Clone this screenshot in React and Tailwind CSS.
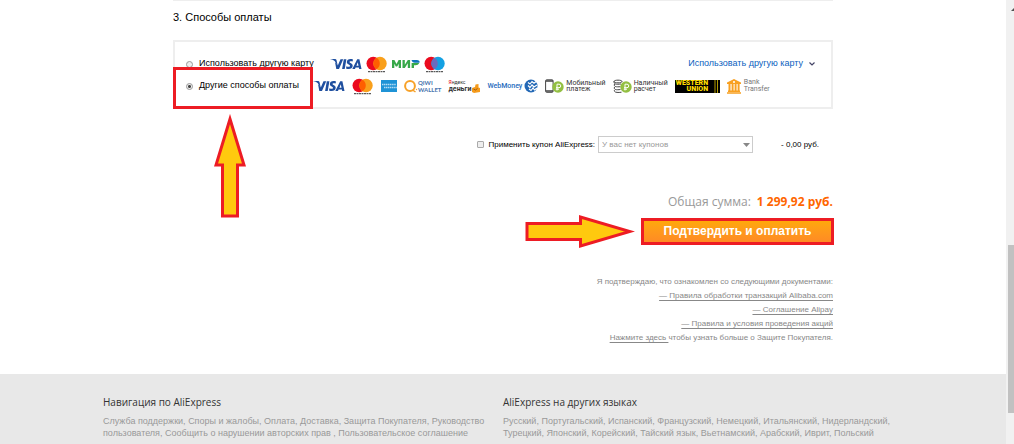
import React, { useState } from 'react';

const Visa = () => (
  <svg width="32" height="12" viewBox="0 0 32 12" role="img" aria-label="VISA">
    <path d="M.5 1H5c.8 0 1.300.4 1.500 1.100L8 9 5.500 4.200C4.500 2.500 2.800 1.600.5 1.300z" fill="#1f4f9f" />
    <path d="M5 4 6.300 11h2.700L13.200 1.200h-2.700L7.800 7.600z" fill="#1f4f9f" />
    <path d="M13.800 1.200h2.600L14.700 11h-2.600z" fill="#1f4f9f" />
    <path d="M23 1.500c-3-1.200-6.200-.2-6.200 2.400 0 2.400 3.300 2.500 3.300 3.900 0 1.300-2.200 1.200-3.700.4l-.4 2.200c3 1.200 6.700.4 6.700-2.700 0-2.500-3.200-2.600-3.200-3.700 0-1 1.800-1 3.100-.4z" fill="#1f4f9f" />
    <path d="M27.200 1.200h2.200L31.500 11h-2.300l-.3-1.400h-3.300L25 11h-2.700zM27.800 4.200l-1.400 3.600h2.100z" fill="#1f4f9f" fillRule="evenodd" />
  </svg>
);

const Circles = ({ left, right, middle, label }) => (
  <svg width="22" height="17" viewBox="0 0 22 17" role="img" aria-label={label}>
    <circle cx="7.200" cy="7.500" r="6.700" fill={left} />
    <circle cx="14" cy="7.500" r="6.700" fill={right} />
    <path d="M10.600 1.800a6.700 6.700 0 0 1 0 11.400a6.700 6.700 0 0 1 0-11.400z" fill={middle} />
    <path d="M2 15.700h17" stroke="#333" strokeDasharray="2 .5" />
  </svg>
);

const MasterCard = () => <Circles left="#eb0a1e" right="#f9a01b" middle="#ff5f00" label="mastercard" />;
const Maestro = () => <Circles left="#eb0a1e" right="#14a1e3" middle="#6c6bbd" label="maestro" />;

const Mir = () => (
  <svg width="28" height="10" viewBox="0 0 28 10" role="img" aria-label="МИР">
    <path d="M0 9V1h2.400L4.500 5 6.600 1H9v8H6.700V4.800L5.200 7.500H3.800L2.300 4.800V9z" fill="#37a849" />
    <path d="M10.500 9V1h2.300v4.700L15.800 1h2.300v8h-2.300V4.300L12.800 9z" fill="#37a849" />
    <path d="M19.600 4h7.600c-.7 1.600-2 2.200-3.500 2.200H22V9h-2.400z" fill="#37a849" />
    <path d="M19.500 1h5.300c2 0 3.200 1 2.700 2.700h-4.700C21 3.700 19.800 2.600 19.500 1z" fill="#0f75bc" />
  </svg>
);

const Amex = () => (
  <svg width="16" height="12" viewBox="0 0 16 12" role="img" aria-label="American Express">
    <path d="M0 0h16v12H0z" fill="#1f93d6" />
    <path d="M1 4.500h14" stroke="#b4dcf4" strokeWidth="1.500" strokeDasharray="1.400 .5" />
    <path d="M3 7.600h13" stroke="#b4dcf4" strokeWidth="1.500" strokeDasharray="1.400 .5" />
  </svg>
);

const Qiwi = () => (
  <span className="flex items-center">
    <svg width="14" height="13" viewBox="0 0 14 13">
      <circle cx="6" cy="6" r="4.900" fill="none" stroke="#f7a128" strokeWidth="2" />
      <path d="m8.500 10 3 2" stroke="#f7a128" strokeWidth="1.500" />
      <circle cx="12.500" cy="9.500" r=".7" fill="#f7a128" />
    </svg>
    <span className="font-['Lato',sans-serif] text-[6px] leading-[7px] font-bold text-[#4774ad]">
      QIWI
      <br />
      WALLET
    </span>
  </span>
);

const YandexMoney = () => (
  <span className="flex items-end gap-px">
    <span className="font-['Roboto',sans-serif] text-[#333]">
      <span className="block text-[5px] leading-[5px]">
        <span className="text-red-600">Я</span>ндекс
      </span>
      <span className="block text-[7px] leading-[8px] font-bold">деньги</span>
    </span>
    <svg width="8" height="9" viewBox="0 0 8 9">
      <path d="M0 4 3 3l.5-2.500L6.500 0v3.500L8 4v4L2 9 0 8z" fill="#f59b1c" />
      <path d="m1.500 5 2 1 2-1.500" stroke="#8a4b10" fill="none" strokeWidth=".8" />
    </svg>
  </span>
);

const WebMoney = () => (
  <span className="flex items-center gap-0.5">
    <span className="font-['Roboto',sans-serif] text-[7px] leading-[14px] font-medium text-[#1f6bbd]">WebMoney</span>
    <svg width="14" height="14" viewBox="0 0 14 14">
      <circle cx="7" cy="7" r="6.500" fill="#2167b5" />
      <path d="M4 3.500 6 5l2-2.500 2 1.800 2.500-2M4 6.500l2 2L8 6l2 2 3-2M5 10l2 1.500L9 9l1.500 2L13 9" stroke="#fff" strokeWidth="1.200" fill="none" />
    </svg>
  </span>
);

const Ruble = ({ x, y }) => (
  <g transform={`translate(${x} ${y})`}>
    <circle r="5.700" fill="#93bf42" />
    <path d="M-1 3.500v-6.300h2a1.700 1.700 0 0 1 0 3.500h-3M-2.200 2.200H1" stroke="#fff" fill="none" />
  </g>
);

const Caption = ({ children }) => (
  <span className="font-['Roboto',sans-serif] text-[7px] leading-[6px] whitespace-pre-line text-[#333]">{children}</span>
);

const MobilePay = () => (
  <span className="flex items-center gap-0.5">
    <svg width="19" height="15" viewBox="0 0 19 15">
      <rect x=".6" y=".8" width="7.500" height="12.500" rx="1" fill="none" stroke="#444" />
      <path d="M1 2h7M1 12h7" stroke="#444" strokeWidth="1.500" />
      <Ruble x={13} y={8} />
    </svg>
    <Caption>{'Мобильный\nплатеж'}</Caption>
  </span>
);

const CashPay = () => (
  <span className="flex items-center gap-0.5">
    <svg width="19" height="15" viewBox="0 0 19 15">
      <path d="M1 2.500C1 .7 9 .7 9 2.500S1 4.300 1 2.500c0 3 2 3 7 2.500M1.500 5c-1 3 2 3 6 2.700M1.500 8c-1 3 2 3 6 2.500M1.500 11c-1 2.500 3 2.800 7 2.200" fill="none" stroke="#444" />
      <Ruble x={13} y={8} />
    </svg>
    <Caption>{'Наличный\nрасчет'}</Caption>
  </span>
);

const WesternUnion = () => (
  <span className="flex h-[13px] w-[45px] justify-between bg-black pr-0.5 text-right font-['Roboto',sans-serif] text-[7px] leading-[6px] font-black text-[#ffdd00]">
    <span className="pl-px">
      WESTERN
      <br />
      UNION
    </span>
    <svg width="4" height="13" viewBox="0 0 4 13">
      <path d="M1 0v13M3.500 0v13" stroke="#fd0" strokeWidth=".7" />
    </svg>
  </span>
);

const BankTransfer = () => (
  <span className="flex items-center gap-[3px]">
    <svg width="14" height="15" viewBox="0 0 14 15">
      <path d="M7 0 14 3.600V5H0V3.600zM1 11.500h12V13H1zM0 13.300h14v1.500H0zM1.500 5h2v6.500h-2zM4.600 5h2v6.500h-2zM7.600 5h2v6.500h-2zM10.600 5h2v6.500h-2z" fill="#f8a020" />
      <circle cx="7" cy="2.900" r="1" fill="#fff" />
    </svg>
    <span className="font-['Roboto',sans-serif] text-[7px] leading-[7px] text-[#777]">
      Bank
      <br />
      Transfer
    </span>
  </span>
);

const documents = [
  '— Правила обработки транзакций Alibaba.com',
  '— Соглашение Alipay',
  '— Правила и условия проведения акций',
];

const footerColumns = [
  {
    title: 'Навигация по AliExpress',
    links: ['Служба поддержки', 'Споры и жалобы', 'Оплата', 'Доставка', 'Защита Покупателя', 'Руководство пользователя', 'Сообщить о нарушении авторских прав ', 'Пользовательское соглашение'],
  },
  {
    title: 'AliExpress на других языках',
    links: ['Русский', 'Португальский', 'Испанский', 'Французский', 'Немецкий', 'Итальянский', 'Нидерландский', 'Турецкий', 'Японский', 'Корейский', 'Тайский язык', 'Вьетнамский', 'Арабский', 'Иврит', 'Польский'],
  },
];

const radioClass =
  'm-0 mr-1.5 size-[7px] shrink-0 appearance-none rounded-full border border-[#999] bg-[#eee] checked:bg-[radial-gradient(#444_1px,#eee_2px)]';

export default function App() {
  const [method, setMethod] = useState('other');

  return (
    <div className="flex h-screen overflow-hidden bg-white font-['Liberation_Sans',Arial,sans-serif] text-black">
      <div className="flex min-w-0 flex-1 flex-col">
        <main className="mx-auto w-full max-w-[660px] border-t border-[#eee]">
          <h2 className="pt-2 pb-[15px] text-[11px] leading-4">3. Способы оплаты</h2>

          <section className="border-2 border-[#eee] pt-[11px] pb-2.5 pl-[11px] text-[9px]">
            <div className="flex h-[22px] items-center">
              <label className="flex items-center whitespace-nowrap">
                <input type="radio" name="method" className={radioClass} checked={method === 'card'} onChange={() => setMethod('card')} />
                Использовать другую карту
              </label>
              <div className="ml-4 flex items-center gap-1">
                <Visa />
                <MasterCard />
                <Mir />
                <Maestro />
              </div>
              <a href="#cards" className="mr-4 ml-auto flex items-center gap-1.5 text-[#0b5fc0]">
                Использовать другую карту
                <svg width="6" height="4" viewBox="0 0 6 4">
                  <path d="m.5.500 2.500 2.500L5.500.500" fill="none" stroke="#446" strokeWidth="1.200" />
                </svg>
              </a>
            </div>
            <div className="flex h-[22px] items-center">
              <div className="relative">
                <label className="flex items-center whitespace-nowrap">
                  <input type="radio" name="method" className={radioClass} checked={method === 'other'} onChange={() => setMethod('other')} />
                  Другие способы оплаты
                </label>
                <span className="pointer-events-none absolute -top-3 -right-[14px] -bottom-4 -left-[13px] z-10 border-3 border-[#ed1c24]" />
                <svg className="pointer-events-none absolute top-[35px] left-7" width="32" height="104" viewBox="0 0 32 104">
                  <path d="M16 5 30 51H23.500V102H8.500V51H2z" fill="#ffc90e" stroke="#ed1c24" strokeWidth="3" />
                </svg>
              </div>
              <div className="ml-3.5 flex items-center gap-[7px]">
                <Visa />
                <MasterCard />
                <Amex />
                <Qiwi />
                <YandexMoney />
                <WebMoney />
                <MobilePay />
                <CashPay />
                <WesternUnion />
                <BankTransfer />
              </div>
            </div>
          </section>

          <div className="mt-[27px] flex h-[17px] items-center justify-end pr-3.5 text-[8px]">
            <label className="flex items-center gap-1">
              <input type="checkbox" className="m-0 size-[7px] appearance-none rounded-[1px] border border-[#aaa] bg-[#eee] checked:bg-[#777]" />
              Применить купон AliExpress:
            </label>
            <div className="relative ml-[3px] h-[17px] w-[155px]">
              <select aria-label="Купон" className="block h-full w-full appearance-none border border-[#ccc] bg-white px-[3px] text-[8px] text-[#999]">
                <option>У вас нет купонов</option>
              </select>
              <svg className="pointer-events-none absolute top-[7px] right-[3px]" width="7" height="4" viewBox="0 0 7 4">
                <path d="M0 0h7L3.500 4z" fill="#888" />
              </svg>
            </div>
            <span className="ml-7">- 0,00 руб.</span>
          </div>

          <p className="mt-10 flex items-center justify-end gap-1.5 font-['Open_Sans',sans-serif] text-[12px] leading-[18px] text-[#999]">
            Общая сумма:
            <b className="font-bold text-[#ff6600]">1 299,92 руб.</b>
          </p>

          <div className="mt-[3px] -mr-px flex items-center justify-end gap-1.5">
            <svg width="110" height="34" viewBox="0 0 110 34">
              <path d="M2 9.500H55.500V3L105 17.500 55.500 32V25.500H2z" fill="#ffc90e" stroke="#ed1c24" strokeWidth="3" />
            </svg>
            <button className="h-[27px] w-[193px] border-3 border-[#ed1c24] bg-linear-to-b from-[#ffa80a] to-[#ff8a24] text-[12px] leading-5 font-bold text-white">
              Подтвердить и оплатить
            </button>
          </div>

          <div className="mt-[27px] pb-[29px] text-right text-[8px] leading-[14px] text-[#888]">
            <p>Я подтверждаю, что ознакомлен со следующими документами:</p>
            {documents.map((title) => (
              <p key={title}>
                <a href="#doc" className="underline underline-offset-2">{title}</a>
              </p>
            ))}
            <p>
              <a href="#protection" className="underline underline-offset-2">Нажмите здесь </a>
              чтобы узнать больше о Защите Покупателя.
            </p>
          </div>
        </main>

        <footer className="flex-1 bg-[#e8e8e8] pt-5">
          <div className="mx-auto grid w-full max-w-[800px] grid-cols-2">
            {footerColumns.map(({ title, links }) => (
              <section key={title} className="pr-2">
                <h3 className="font-['Open_Sans',sans-serif] text-[10px] leading-4 text-[#333]">{title}</h3>
                <p className="mt-[5px] text-[9px] leading-3 text-[#999]">
                  {links.map((link, i) => (
                    <React.Fragment key={link}>
                      {i > 0 && ', '}
                      <a href="#footer">{link}</a>
                    </React.Fragment>
                  ))}
                </p>
              </section>
            ))}
          </div>
        </footer>
      </div>

      <div className="flex w-2 shrink-0 flex-col items-end bg-[#f1f1f1]">
        <div className="w-[3px] flex-[245]">
          <svg className="mt-2 block" width="3" height="3" viewBox="0 0 3 3">
            <path d="M3 0v3H0z" fill="#505050" />
          </svg>
        </div>
        <div className="w-1.5 flex-[168] bg-[#c1c1c1]" />
        <div className="flex-[31]" />
      </div>
    </div>
  );
}
